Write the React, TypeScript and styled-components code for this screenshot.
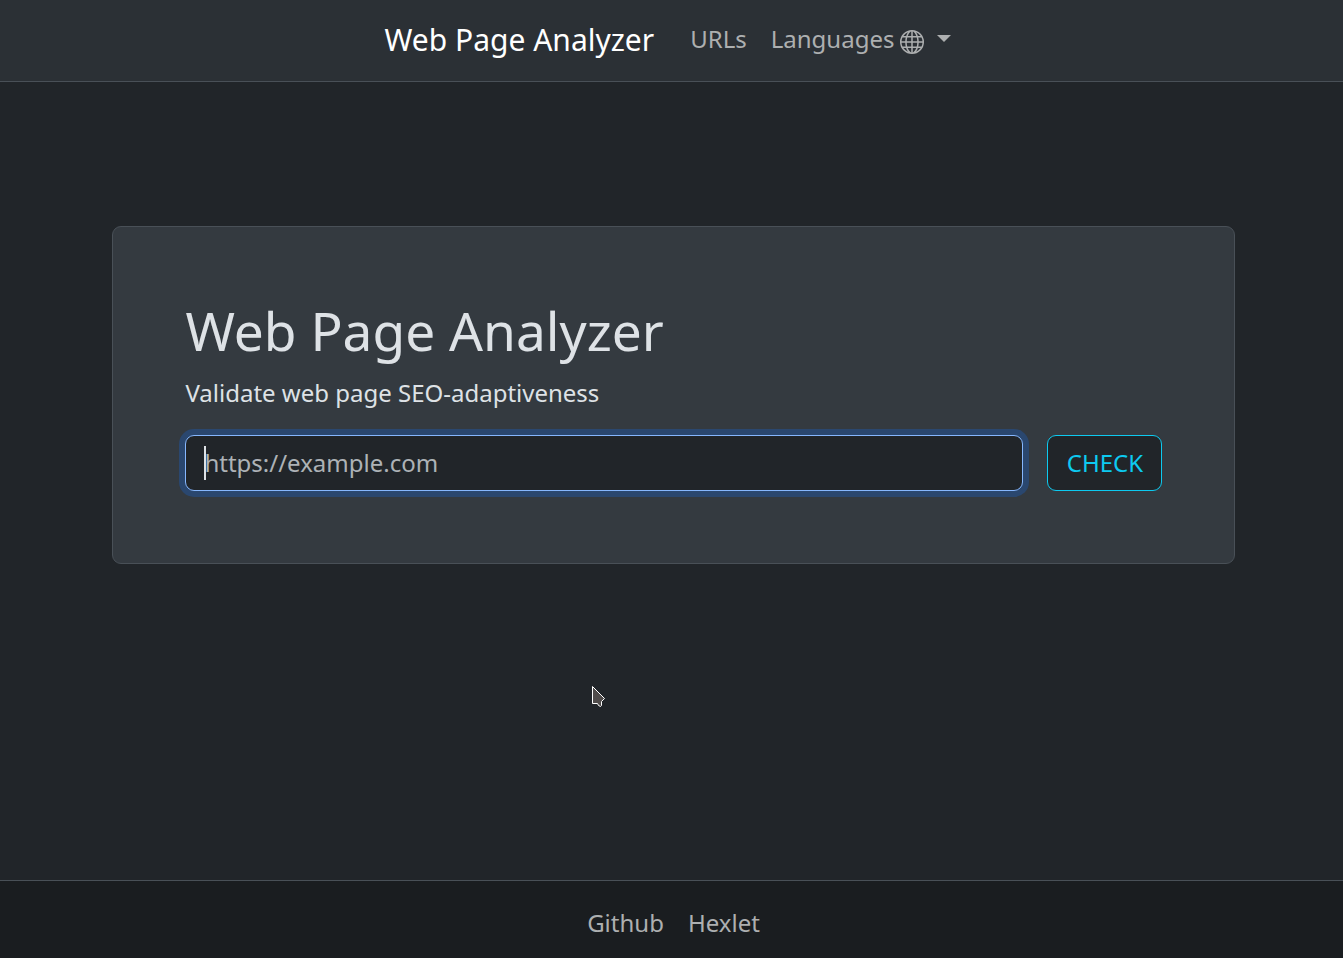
import React from "react";
import styled, { createGlobalStyle } from "styled-components";
import { BsGlobe } from "react-icons/bs";

const GlobalStyle = createGlobalStyle`
  *, *::before, *::after { box-sizing: border-box; }
  body {
    margin: 0;
    background: #212529;
    color: #dee2e6;
    font: 400 24px/1.5 "Noto Sans", "Liberation Sans", sans-serif;
  }
`;

const Page = styled.div`
  height: 958px;
  display: flex;
  flex-direction: column;
  overflow: hidden;
  position: relative;
`;

const Navbar = styled.header`
  height: 82px;
  flex: none;
  display: flex;
  justify-content: center;
  align-items: center;
  padding: 0 0 3px 5px;
  background: #2b3035;
  border-bottom: 1px solid #495057;
`;

const Brand = styled.a`
  color: #fff;
  font-size: 30px;
  line-height: 45px;
  margin-right: 24px;
`;

const NavLink = styled.a`
  display: flex;
  align-items: center;
  padding: 12px;
  color: #adafb0;
  white-space: nowrap;
`;

const Globe = styled(BsGlobe)`
  width: 24px;
  height: 24px;
  margin: 5px 0 0 6px;
`;

const Caret = styled.span`
  margin: -1px 0 0 13px;
  border: 7.2px solid transparent;
  border-top-color: currentColor;
  border-bottom: 0;
`;

const Main = styled.main`
  flex: 1;
  padding: 144px 107.6px 0 112.4px;
`;

const Card = styled.section`
  height: 338px;
  padding: 72px;
  background: #343a40;
  border: 1px solid #495057;
  border-radius: 9px;
`;

const Title = styled.h1`
  margin: 0 0 12px;
  font-size: 53.22px;
  font-weight: 400;
  line-height: 64px;
`;

const Lead = styled.p`
  margin: 0 0 24px;
`;

const Form = styled.form`
  display: flex;
  gap: 24px;
`;

const Field = styled.div`
  flex: 1;
  position: relative;
`;

const UrlInput = styled.input`
  display: block;
  width: 100%;
  height: 56px;
  padding: 8px 18px 10px;
  font: inherit;
  color: #dee2e6;
  background: #212529;
  border: 1px solid #86b7fe;
  border-radius: 9px;
  outline: 0;
  box-shadow: 0 0 0 6px rgba(13, 110, 253, 0.25);
  &::placeholder {
    color: rgba(222, 226, 230, 0.75);
    opacity: 1;
  }
`;

const TextCursor = styled.span`
  position: absolute;
  left: 19px;
  top: 11px;
  width: 2px;
  height: 34px;
  background: #dee2e6;
`;

const CheckButton = styled.button`
  width: 115px;
  height: 56px;
  padding: 0;
  font: inherit;
  color: #0dcaf0;
  background: #212529;
  border: 1px solid #0dcaf0;
  border-radius: 9px;
`;

const Footer = styled.footer`
  height: 78px;
  flex: none;
  display: flex;
  justify-content: center;
  gap: 24px;
  padding: 24px 0 0 4px;
  background: #1a1d20;
  border-top: 1px solid #495057;
  color: #adafb0;
`;

const Pointer = styled.svg`
  position: absolute;
  left: 591px;
  top: 685px;
`;

export default function App() {
  return (
    <>
      <GlobalStyle />
      <Page>
        <Navbar>
          <Brand>Web Page Analyzer</Brand>
          <NavLink>URLs</NavLink>
          <NavLink>
            Languages
            <Globe />
            <Caret />
          </NavLink>
        </Navbar>
        <Main>
          <Card>
            <Title>Web Page Analyzer</Title>
            <Lead>Validate web page SEO-adaptiveness</Lead>
            <Form>
              <Field>
                <UrlInput placeholder="https://example.com" />
                <TextCursor />
              </Field>
              <CheckButton type="button">CHECK</CheckButton>
            </Form>
          </Card>
        </Main>
        <Footer>
          <a>Github</a>
          <a>Hexlet</a>
        </Footer>
        <Pointer width="16" height="24" viewBox="0 0 16 24">
          <path
            d="M1.5 1.5V18.5H6.5L7.5 20.5L9.5 21.5L10.5 20.5V16.5L13.5 13.5Z"
            fill="#504c4b"
            stroke="#fff"
          />
        </Pointer>
      </Page>
    </>
  );
}
